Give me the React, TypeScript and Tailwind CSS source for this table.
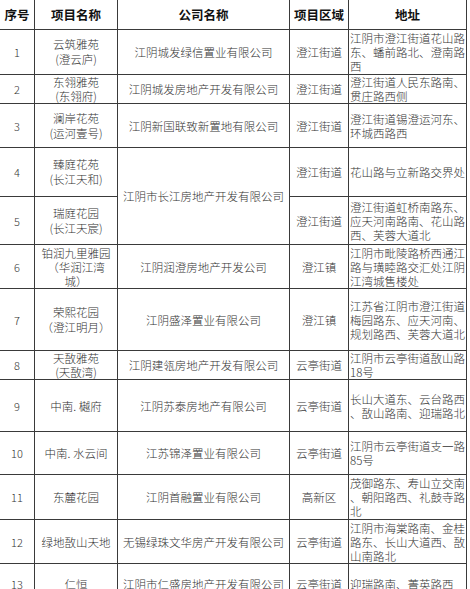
type Row = {
  no: string;
  name: string[];
  company?: string;
  span?: number;
  area: string;
  addr: string;
  h: number;
};

const DATA: Row[] = [
  { no: "1", name: ["云筑雅苑", "(澄云庐)"], company: "江阴城发绿信置业有限公司", area: "澄江街道", addr: "江阴市澄江街道花山路东、蟠前路北、澄南路西", h: 45 },
  { no: "2", name: ["东翎雅苑", "(东翎府)"], company: "江阴城发房地产开发有限公司", area: "澄江街道", addr: "澄江街道人民东路南、贯庄路西侧", h: 29 },
  { no: "3", name: ["澜岸花苑", "(运河壹号)"], company: "江阴新国联致新置地有限公司", area: "澄江街道", addr: "澄江街道锡澄运河东、环城西路西", h: 44 },
  { no: "4", name: ["臻庭花苑", "(长江天和)"], company: "江阴市长江房地产开发有限公司", span: 2, area: "澄江街道", addr: "花山路与立新路交界处", h: 49 },
  { no: "5", name: ["瑞庭花园", "(长江天宸)"], area: "澄江街道", addr: "澄江街道虹桥南路东、应天河南路南、花山路西、芙蓉大道北", h: 48 },
  { no: "6", name: ["铂润九里雅园", "（华润江湾", "城）"], company: "江阴润澄房地产开发公司", area: "澄江镇", addr: "江阴市毗陵路桥西通江路与璜睦路交汇处江阴江湾城售楼处", h: 44 },
  { no: "7", name: ["荣熙花园", "（澄江明月）"], company: "江阴盛泽置业有限公司", area: "澄江镇", addr: "江苏省江阴市澄江街道梅园路东、应天河南、规划路西、芙蓉大道北", h: 62 },
  { no: "8", name: ["天敔雅苑", "(天敔湾)"], company: "江阴建瓴房地产开发有限公司", area: "云亭街道", addr: "江阴市云亭街道敔山路18号", h: 29 },
  { no: "9", name: ["中南. 樾府"], company: "江阴苏泰房地产有限公司", area: "云亭街道", addr: "长山大道东、云台路西、敔山路南、迎瑞路北", h: 52 },
  { no: "10", name: ["中南. 水云间"], company: "江苏锦泽置业有限公司", area: "云亭街道", addr: "江阴市云亭街道支一路85号", h: 43 },
  { no: "11", name: ["东麓花园"], company: "江阴首融置业有限公司", area: "高新区", addr: "茂御路东、寿山立交南、朝阳路西、礼鼓寺路北", h: 45 },
  { no: "12", name: ["绿地敔山天地"], company: "无锡绿珠文华房产开发有限公司", area: "云亭街道", addr: "江阴市海棠路南、金桂路东、长山大道西、敔山南路北", h: 44 },
  { no: "13", name: ["仁恒"], company: "江阴市仁盛房地产开发有限公司", area: "云亭街道", addr: "迎瑞路南、菁英路西", h: 40 },
];

const cell = "border border-[#3a3a3a] text-center align-middle";

export default function App() {
  return (
    <div
      className="h-[589px] w-[470px] overflow-hidden bg-white text-[11.5px] font-light leading-[14px] text-[#333]"
      style={{ fontFamily: '"Noto Sans CJK SC", sans-serif' }}
    >
      <table className="ml-[-1px] mt-[-1px] w-[467px] table-fixed border-collapse">
        <colgroup>
          <col className="w-[35px]" />
          <col className="w-[83px]" />
          <col className="w-[172px]" />
          <col className="w-[59px]" />
          <col className="w-[118px]" />
        </colgroup>
        <thead>
          <tr className="h-[30px] text-[12.5px] font-bold text-[#111]">
            <th className={cell}>序号</th>
            <th className={cell}>项目名称</th>
            <th className={cell}>公司名称</th>
            <th className={cell}>项目区域</th>
            <th className={cell}>地址</th>
          </tr>
        </thead>
        <tbody>
          {DATA.map((r) => (
            <tr key={r.no} style={{ height: r.h }}>
              <td className={`${cell} text-[11px]`}>{r.no}</td>
              <td className={`${cell} ${r.name.length === 2 && r.h >= 40 ? "leading-[15px]" : "leading-[14px]"}`}>
                {r.name.map((n, i) => (
                  <div key={i}>{n}</div>
                ))}
              </td>
              {r.company !== undefined && (
                <td className={cell} rowSpan={r.span ?? 1}>
                  {r.company}
                </td>
              )}
              <td className={cell}>{r.area}</td>
              <td className={`${cell} break-all px-[1px] text-left [line-break:anywhere]`}>{r.addr}</td>
            </tr>
          ))}
        </tbody>
      </table>
    </div>
  );
}
